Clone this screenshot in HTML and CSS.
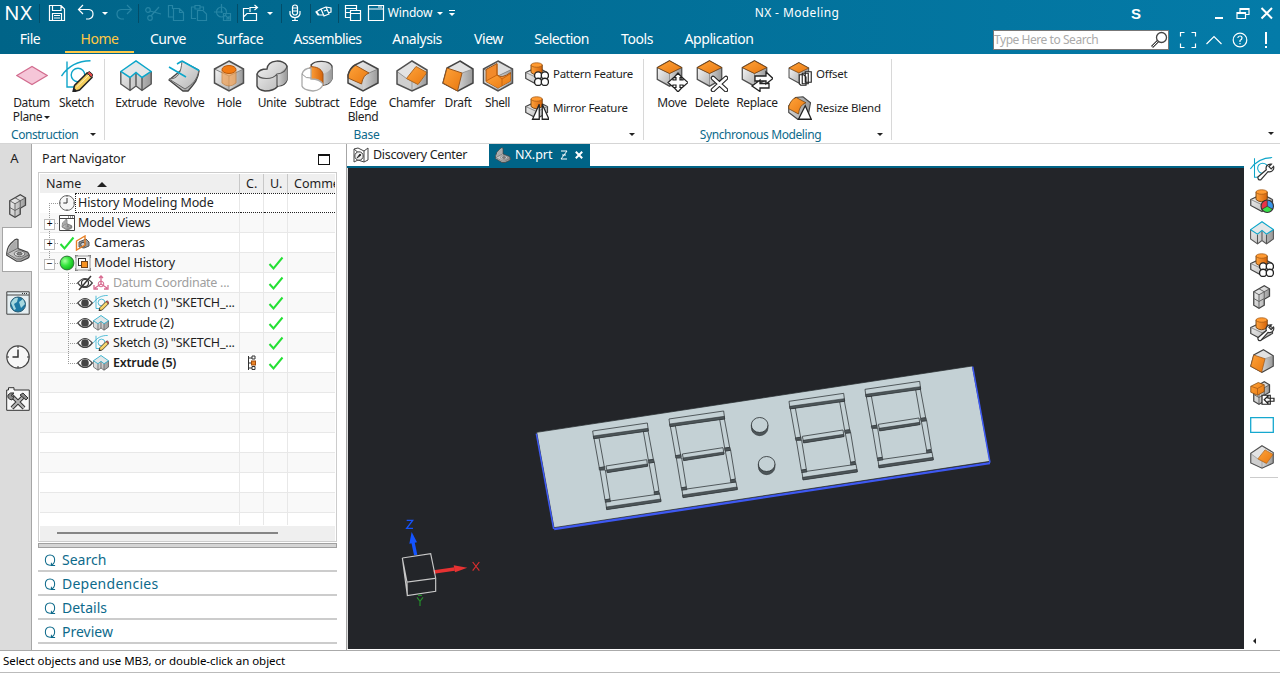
FILE: index.html
```html
<!DOCTYPE html>
<html lang="en">
<head>
<meta charset="utf-8">
<title>NX - Modeling</title>
<link rel="stylesheet" href="styles.css">
</head>
<body>
<svg class="defs" width="0" height="0" aria-hidden="true">
  <defs>
    <linearGradient id="gr" x1="0" y1="0" x2="1" y2="1"><stop offset="0" stop-color="#f4f4f4"/><stop offset="1" stop-color="#b4b4b4"/></linearGradient>
    <linearGradient id="gd" x1="0" y1="0" x2="1" y2="0"><stop offset="0" stop-color="#d4d4d4"/><stop offset="1" stop-color="#999"/></linearGradient>
    <linearGradient id="or" x1="0" y1="0" x2="1" y2="1"><stop offset="0" stop-color="#ffa33a"/><stop offset="1" stop-color="#e87810"/></linearGradient>
    <linearGradient id="od" x1="0" y1="0" x2="1" y2="0"><stop offset="0" stop-color="#ffa23c"/><stop offset="1" stop-color="#d5640a"/></linearGradient>
    <radialGradient id="gn" cx=".35" cy=".35" r=".7"><stop offset="0" stop-color="#a8ffa0"/><stop offset=".5" stop-color="#35e53d"/><stop offset="1" stop-color="#0fb61a"/></radialGradient>
  </defs>
  <symbol id="plane" viewBox="0 0 32 32"><path d="M0.8 15.500 16 6.500 31.200 15.500 16 24.500Z" fill="#f5c6d8" stroke="#d26c8e" stroke-width="1.200"/></symbol>
  <symbol id="curves" viewBox="0 0 32 32"><g fill="none" stroke="#0fa5c9" stroke-width="1.400"><path d="M.5 16C8 5 17 1 29.500.8M6 1.500V27H17"/><circle cx="17" cy="15" r="6.800"/></g></symbol>
  <symbol id="sketch" viewBox="0 0 32 32"><use href="#curves"/><path d="M12 32 13.500 25.500 26 13 31 17.500 18.500 30Z" fill="#f4ce5b" stroke="#222" stroke-width="1.500"/><path d="M26 13 28.500 11.500 32 14.800 30.500 17.500Z" fill="#e04848" stroke="#333"/><path d="M12 32 13 28 16 30.500Z" fill="#222"/><path d="M15.500 27 28 15" stroke="#fff1b8"/></symbol>
  <symbol id="extrude" viewBox="0 0 32 32"><path d="M.8 11.500 16 1 31.200 11.500V24L22 30.500 16 26 10 30.500.8 24Z" fill="url(#gr)"/><path d="M10 17.500 16 13V26L10 30.500ZM22 17.500 31.200 11.500V24L22 30.500Z" fill="url(#gd)"/><path d="M.8 11.500V24L10 30.500 16 26 22 30.500 31.200 24V11.500M10 18V30M22 18V30M16 13V26" fill="none" stroke="#555" stroke-width="1.400"/><path d="M.8 11.500 16 1 31.200 11.500 22 17.500 16 12.500 10 17.500Z" fill="#e4e7e8" stroke="#0ba6ca" stroke-width="1.500"/></symbol>
  <symbol id="revolve" viewBox="0 0 32 32"><path d="M1 20 12 11 22 6 31 11C30 20 26 24 20 31H15Z" fill="url(#gd)" stroke="#444" stroke-width="1.300"/><path d="M1 19C10 19 13 13 14 1L31 10C29 20 25 24 17 29Z" fill="url(#gr)" stroke="#666"/><path d="M14 1 31 10.500M1 7 18 17M14 1 9 4" stroke="#0ba6ca" stroke-width="1.600"/></symbol>
  <symbol id="cube" viewBox="0 0 32 32"><path d="M16 1 30.500 9V23L16 31 1.500 23V9Z" fill="#ddd"/><path d="M1.500 9 16 16V31L1.500 23Z" fill="url(#gr)"/><path d="M30.500 9 16 16V31L30.500 23Z" fill="url(#gd)"/><path d="M1.500 9 16 16 30.500 9M16 16V31" stroke="#888" fill="none"/><path d="M16 1 30.500 9V23L16 31 1.500 23V9Z" fill="none" stroke="#505050" stroke-width="1.500"/></symbol>
  <symbol id="ocube" viewBox="0 0 32 32"><use href="#cube"/><path d="M16 1 30.500 9 16 16 1.500 9Z" fill="url(#or)" stroke="#76410f" stroke-width="1"/></symbol>
  <symbol id="hole" viewBox="0 0 32 32"><use href="#cube"/><path d="M9 10V23Q16 29 23 23V10Z" fill="#f7a04d" opacity=".65" stroke="#c9792b"/><ellipse cx="16" cy="9.500" rx="7" ry="4" fill="#f47c13" stroke="#ba5a0c"/></symbol>
  <symbol id="unite" viewBox="0 0 32 32"><path d="M1 14Q3 9 11 9C12-1 28-1 31 6V20Q29 26 22 26Q18 31 9 31Q2 30 1 26Z" fill="url(#gr)" stroke="#444" stroke-width="1.400"/><path d="M21 15 31 7V20Q29 25 22 26Z" fill="url(#gd)"/><path d="M1 14C3 20 17 20 21 14Q30 13 31 6M21 15V26" stroke="#555" fill="none" stroke-width="1.200"/></symbol>
  <symbol id="subtract" viewBox="0 0 32 32"><path d="M10 5C14 0 28 0 31 6V19Q28 26 20 25Z" fill="url(#gr)" stroke="#444" stroke-width="1.300"/><path d="M20 14Q28 13 31 7V20Q28 25 20 25Z" fill="url(#gd)"/><path d="M9 7C15 6 21 9 22 14V26Q17 20 9 20Z" fill="url(#od)" stroke="#a65211"/><path d="M1 14Q3 8 10 8V19Q19 19 22 24Q21 30 12 31Q2 30 1 26Z" fill="#fff" stroke="#aaa" stroke-width="1.300"/><path d="M1 14Q5 19 10 18" fill="none" stroke="#999"/></symbol>
  <symbol id="blend" viewBox="0 0 32 32"><path d="M16 1 31 9V23L16 31 1 23V15Q3 8 8 5Z" fill="url(#gr)"/><path d="M31 9 20 14Q16 18 16 31L31 23Z" fill="url(#gd)"/><path d="M1 15Q3 7 8 5L22 13Q16 15 14.500 24L1 18Z" fill="url(#or)" stroke="#9a561b"/><path d="M22 13 31 9" stroke="#888"/><path d="M16 1 31 9V23L16 31 1 23V15Q3 8 8 5Z" fill="none" stroke="#444" stroke-width="1.500"/></symbol>
  <symbol id="chamfer" viewBox="0 0 32 32"><path d="M16 1 31 10V24L16 31 1 24V11Z" fill="#e3e3e3"/><path d="M1 11 10.500 18.500 16 21.500V31L1 24Z" fill="#cfcfcf"/><path d="M31 13 22 24 16 21.500V31L31 24Z" fill="url(#gd)"/><path d="M1 11.500 10.500 18.500 16 21.500V31M16 21.500 22 24" fill="none" stroke="#999"/><path d="M20 6.500 31 12.500 22 24.500 10.500 18.500Z" fill="url(#or)" stroke="#b26a22"/><path d="M16 1 31 10V24L16 31 1 24V11Z" fill="none" stroke="#505050" stroke-width="1.500"/></symbol>
  <symbol id="draft" viewBox="0 0 32 32"><path d="M18 1 31 9V23L16 31 1 23 5 8Z" fill="#e2e2e2"/><path d="M31 9 20 13 15.500 31 31 23Z" fill="url(#gd)"/><path d="M20 13 31 9" stroke="#999"/><path d="M18 1 31 9V23L16 31 1 23 5 8Z" fill="none" stroke="#444" stroke-width="1.500"/><path d="M5 8 20 13 15.500 31 1 23Z" fill="url(#or)" stroke="#9a561b"/></symbol>
  <symbol id="shell" viewBox="0 0 32 32"><use href="#cube"/><path d="M4 9.500 15 3.500V15Q20 19 28.500 12.500V21L16 28 4 21.500Z" fill="#f28a2b" stroke="#9a561b"/><path d="M4 21.500 15 15 20 19 28.500 14V21L16 28Z" fill="url(#or)"/><path d="M4 21 15 15V4M15 15 20 19V26M20 19 28 14" stroke="#c8640f" fill="none"/></symbol>
  <symbol id="base" viewBox="0 0 32 32"><path d="M1 14 16 7 30 14V22L16 30 1 22Z" fill="url(#gr)" stroke="#444" stroke-width="1.600"/><path d="M1 14 16 21 30 14M16 21V30" fill="none" stroke="#777"/><path d="M8 4V14Q15 20 23 14V4Z" fill="url(#od)" stroke="#70400f" stroke-width="1.200"/><ellipse cx="15.500" cy="4" rx="7.500" ry="3" fill="#ff9a31" stroke="#a45914"/></symbol>
  <symbol id="pattern" viewBox="0 0 32 32"><use href="#base"/><g fill="#fff" stroke="#222" stroke-width="1.800"><circle cx="17.500" cy="18" r="4.800"/><circle cx="26.500" cy="18" r="4.800"/><circle cx="17.500" cy="26.500" r="4.800"/><circle cx="26.500" cy="26.500" r="4.800"/></g></symbol>
  <symbol id="mirror" viewBox="0 0 32 32"><use href="#base"/><path d="M19 11V31H10ZM23 11V31H32Z" fill="#fff" stroke="#222" stroke-width="1.700"/></symbol>
  <symbol id="move" viewBox="0 0 32 32"><svg width="27" height="27"><use href="#ocube"/></svg><path d="M22 13 26 17.500H24V20H27V18L32 22.500 27 27V25H24V27.500H26L22 32 18 27.500H20V25H17V27L12 22.500 17 18V20H20V17.500H18Z" fill="#fff" stroke="#222" stroke-width="1.200"/></symbol>
  <symbol id="delete" viewBox="0 0 32 32"><svg width="27" height="27"><use href="#ocube"/></svg><path d="M17 18 30 30M30 18 17 30" stroke="#222" stroke-width="4.600" stroke-linecap="round"/><path d="M17 18 30 30M30 18 17 30" stroke="#fff" stroke-width="2.400" stroke-linecap="round"/></symbol>
  <symbol id="replace" viewBox="0 0 32 32"><svg width="27" height="27"><use href="#ocube"/></svg><path d="M14 16H25V12L32 18.500 25 24V21H14ZM28 23.500H19V20L11 26 19 31.500V28H28Z" fill="#fff" stroke="#222" stroke-width="1.300"/></symbol>
  <symbol id="offset" viewBox="0 0 32 32"><svg width="29" height="29"><use href="#ocube"/></svg><path d="M23 13H31V27H23ZM19 15H27V29H19ZM15 17H21L24 20V31H17L15 29Z" fill="#fff" stroke="#222" stroke-width="1.500"/></symbol>
  <symbol id="resize" viewBox="0 0 32 32"><path d="M1 13 10 2 20 1 30 9 27 26 13 31 1 22Z" fill="url(#gd)" stroke="#444" stroke-width="1.500"/><path d="M1 14Q4 4 11 2L24 9Q15 12 14 24L1 17Z" fill="url(#or)" stroke="#704210"/><path d="M23 13 31 31H14Z" fill="#fff" stroke="#222" stroke-width="1.700"/></symbol>
  <symbol id="assembly" viewBox="0 0 32 32"><path d="M5 9 19 1 26 5V15L19 19V27L12 31 5 27Z" fill="url(#gr)"/><path d="M12 13 26 5V15L19 19V27L12 31Z" fill="url(#gd)"/><path d="M5 9 19 1 26 5V15L19 19V27L12 31 5 27Z" fill="none" stroke="#444" stroke-width="1.700"/><path d="M5 9 12 13 26 5M12 13V31M5 18 12 22 19 18V9M12 5 19 9" fill="none" stroke="#5c5c5c" stroke-width="1.200"/></symbol>
  <symbol id="part" viewBox="0 0 32 32"><path d="M1 20Q2 10 9 5Q13 0 16 2V14L29 19Q33 24 29 27L20 31H14L1 23Z" fill="url(#gd)" stroke="#444" stroke-width="1.600"/><path d="M3 19Q4 11 10 6Q13 3 14 5V14L5 20Z" fill="#aaa"/><path d="M15 14 2 21 14 28H20L31 22" fill="none" stroke="#555"/><ellipse cx="18" cy="21" rx="7" ry="3.800" fill="#ddd" stroke="#555"/><ellipse cx="18" cy="21" rx="3.500" ry="1.800" fill="#888" stroke="#444"/></symbol>
  <symbol id="clock" viewBox="0 0 24 24"><circle cx="12" cy="12" r="11.200" fill="#f7f7f7" stroke="#444" stroke-width="1.200"/><path d="M12 4.500V12H6.500" stroke="#333" stroke-width="1.500" fill="none"/><path d="M12 1V3M12 21V23M1 12H3M21 12H23" stroke="#333"/></symbol>
  <symbol id="web" viewBox="0 0 24 24"><path d="M.8.800H23.200V23.200H.8Z" fill="#e6eff2" stroke="#444"/><path d="M1 4H23" stroke="#444"/><path d="M16 2.500H22" stroke="#333" stroke-dasharray="1 1"/><circle cx="12" cy="13.500" r="7.500" fill="#1d79a4" stroke="#285a70"/><path d="M5 12Q8 6 12 7L11 11 8 13 10 18 8 19ZM13 11 17 8 19 13 15 17Z" fill="#a6d8df"/></symbol>
  <symbol id="wrench" viewBox="0 0 16 16"><path d="M1 12.500 8.500 6C7.500 3 10 .5 13 1L10.800 3.200 12.800 5.200 15 3C16 6 13 8.500 10 7.700L3.500 15Q1 15.500 1 12.500Z" fill="#fff" stroke="#333" stroke-width="1.100"/></symbol>
  <symbol id="tools" viewBox="0 0 24 24"><path d="M2.500 3V.7H8V3H23.300V23.300H.7V3Z" fill="#f8f8f8" stroke="#333"/><path d="M5 8 18 21M18 9 6 21" stroke="#333" stroke-width="4"/><path d="M5 8 18 21M18 9 6 21" stroke="#b6b6b6" stroke-width="2"/><path d="M14 8 17 6 22 11 20 13ZM2 8Q4 5 8 6L5 8.500 8 10 6 13Q1 12 2 8Z" fill="#888" stroke="#333"/></symbol>
  <symbol id="views" viewBox="0 0 16 16"><path d="M.5.500H15.500V15.500H.5Z" fill="#fff" stroke="#444"/><path d="M0 3.500H16" stroke="#444"/><path d="M9 2H15" stroke="#333" stroke-dasharray="1 1"/><svg x="2.500" y="4" width="11" height="11"><use href="#part"/></svg></symbol>
  <symbol id="camera" viewBox="0 0 16 16"><path d="M4 7 11 4 14 7V11L9 13 4 12Z" fill="#999" stroke="#555"/><circle cx="8" cy="9.500" r="2.300" fill="#ccc" stroke="#444"/><path d="M1.500 6 10 1V10L1.500 15Z" fill="none" stroke="#e78026" stroke-width="1.400"/></symbol>
  <symbol id="history" viewBox="0 0 16 16"><rect x="1" y="1" width="14" height="14" fill="#f6f6f6" stroke="#999"/><path d="M0 3V0H3M13 0H16V3M16 13V16H13M3 16H0V13" fill="none" stroke="#555"/><rect x="3.500" y="3.500" width="7" height="7" fill="#fff" stroke="#333"/><rect x="6.500" y="6.500" width="6" height="6" fill="#f69222" stroke="#70421a"/></symbol>
  <symbol id="eye" viewBox="0 0 16 16"><path d="M.7 8Q8-1 15.300 8Q8 17 .7 8Z" fill="#fff" stroke="#444" stroke-width="1.200"/><circle cx="8" cy="8" r="3.800" fill="#444"/></symbol>
  <symbol id="noeye" viewBox="0 0 16 16"><path d="M.7 8Q8-1 15.300 8Q8 17 .7 8Z" fill="#fff" stroke="#444" stroke-width="1.200"/><circle cx="8" cy="8" r="3.500" fill="none" stroke="#333" stroke-width="1.200"/><path d="M2 15 14 1" stroke="#333" stroke-width="1.400"/></symbol>
  <symbol id="csys" viewBox="0 0 16 16"><path d="M8 1V9M8 9 2 13M8 9 14 13M6 3 8 1 10 3M1 10V14H5M15 10V14H11" fill="none" stroke="#d86a90" stroke-width="1.300"/><circle cx="8" cy="9" r="2.800" fill="none" stroke="#d86a90"/></symbol>
  <symbol id="check" viewBox="0 0 16 16"><path d="M1.500 9 5.500 13.500 14.500 2.500" fill="none" stroke="#25df35" stroke-width="2"/></symbol>
  <symbol id="ball" viewBox="0 0 16 16"><circle cx="8" cy="8" r="6.900" fill="url(#gn)" stroke="#32723a"/></symbol>
  <symbol id="deps" viewBox="0 0 10 16"><path d="M1.500 1V15M1.500 3H5M1.500 8H5M1.500 13H5" stroke="#333" fill="none"/><path d="M5 1H8V4H5ZM5 11.500H8V14.500H5Z" fill="#fff" stroke="#333"/><rect x="4.500" y="6" width="4" height="4" fill="#ec8325" stroke="#a04d0c"/></symbol>
  <symbol id="q" viewBox="0 0 12 14"><path d="M6 1C2.500 1 1 3.500 1 6.500S2.500 12 6 12S11 9.500 11 6.500S9.500 1 6 1ZM7.500 9.500V12.500H11.500" fill="none" stroke="#0d6a8b" stroke-width="1.100"/></symbol>
  <symbol id="discover" viewBox="0 0 16 16"><path d="M1 2 5 1 11 4V15L5 13 1 15ZM11 4 15 1V13L11 15" fill="#fff" stroke="#444"/><path d="M1 2 8 8" stroke="#444"/><circle cx="6" cy="9" r="4.200" fill="#eee" stroke="#444"/><path d="M4 11 7 7 8 8Z" stroke="#333"/></symbol>
</svg>

<div class="app">
  <header class="titlebar">
    <div class="quick">
      <span class="brand">NX</span><i class="sep"></i>
      <svg width="18" height="18" class="line"><path d="M1.500 1.500H13L16.500 5V16.500H1.500ZM4.500 1.500V6.500H13V1.500M4.500 16.500V9.500H13.500V16.500M6 11.500H12M6 14H12"/></svg>
      <svg width="18" height="18" class="line"><path d="M6 1 1.500 5.500 6 10M1.500 5.500H12Q16 6 16 10T12 15H9"/></svg>
      <i class="caret"></i>
      <svg width="18" height="18" class="line dim"><path d="M12 1 16.500 5.500 12 10M16.500 5.500H6Q2 6 2 10T6 15H9"/></svg>
      <i class="sep"></i>
      <svg width="18" height="18" class="line dim"><circle cx="4" cy="6" r="2.300"/><circle cx="6" cy="14" r="2.300"/><path d="M6 7 17 10M7 12 15 3"/></svg>
      <svg width="18" height="18" class="line dim"><path d="M5.500 5V1.500H1.500V13H6.500M6.500 4.500H12.500L16.500 8.500V16.500H6.500ZM12.500 4.500V8.500H16.500"/></svg>
      <svg width="18" height="18" class="line dim"><path d="M6 14.500H1.500V3H5V1.500H10V3H13.500V6M7.500 6.500H13L16.500 10V16.500H7.500ZM5 3V5H10V3"/></svg>
      <svg width="18" height="18" class="line dim"><circle cx="7.500" cy="8" r="5"/><path d="M7.500 0V9M0 8H9M9.500 9.500H16.500V16.500H9.500ZM11 11 15 15M15 12V15H12"/></svg>
      <i class="sep"></i>
      <svg width="18" height="18" class="line"><path d="M7 4.500H1.500V16.500H14.500V9.500H5L1.500 13M8 8V3.500H15M12.500 1 15.500 3.500 12.500 6"/></svg>
      <i class="caret"></i><i class="sep"></i>
      <svg width="14" height="18" class="line"><rect x="4.500" y="1" width="5" height="10" rx="2.500"/><path d="M2 7V10Q3 13.500 7 13.500T12 10V7M7 13.500V16.500M4 16.500H10M5 4H9M5 7H9"/></svg>
      <i class="sep"></i>
      <svg width="18" height="18" class="line"><path d="M6 5 11 3 14 10 9 12ZM11 3 16 4V8L13 9M6 5 1 8 3 11H8M2 8 4 11M9 7 12 6"/></svg>
      <i class="sep"></i>
      <svg width="18" height="18" class="line"><path d="M6 13.500H1.500V1.500H12.500V6M1.500 4.500H12.500M6.500 6.500H16.500V16.500H6.500ZM6.500 9.500H16.500M1.500 8.500H6"/></svg>
      <svg width="18" height="18" class="line"><path d="M1.500 1.500H16.500V16.500H1.500ZM1.500 5H16.500M11 3H15"/></svg>
      <span class="window">Window</span><i class="caret"></i><i class="barred"><i class="caret"></i></i>
      <span class="title">NX - Modeling</span><b class="siemens">S</b>
      <svg width="12" height="18" class="ctl"><path d="M2 14H10"/></svg>
      <svg width="14" height="18" class="ctl thin"><path d="M4 8V4.500H13V10.500H10M4 5.500H13M1 8.500H9.500V14.500H1ZM1 9.500H9.500"/></svg>
      <svg width="14" height="18" class="ctl"><path d="M1.500 4 12 14.500M12 4 1.500 14.500"/></svg>
    </div>
    <nav class="tabs">
      <span>File</span><span class="on">Home</span><span>Curve</span><span>Surface</span><span>Assemblies</span><span>Analysis</span><span>View</span><span>Selection</span><span>Tools</span><span>Application</span>
      <label class="search"><span>Type Here to Search</span><svg width="18" height="18"><circle cx="11.500" cy="6.500" r="5" fill="#fff" stroke="#444" stroke-width="1.300"/><path d="M8 10 2 16" stroke="#444" stroke-width="3"/><path d="M7.500 10.500 2.500 15.500" stroke="#fff"/></svg></label>
      <svg width="18" height="18" class="line"><path d="M1.500 5.500V1.500H5.500M12.500 1.500H16.500V5.500M16.500 12.500V16.500H12.500M5.500 16.500H1.500V12.500"/></svg>
      <svg width="18" height="18" class="line"><path d="M1.500 13 9 5.500 16.500 13"/></svg>
      <svg width="18" height="18" class="line"><circle cx="9" cy="9" r="6.800"/><path d="M6.800 7Q7 5 9 5T11 7Q11 8.500 9 9.500V11M9 12V13.200"/></svg>
      <svg width="6" height="18" class="line"><path d="M3 1V13M3 15V17" stroke-width="2"/></svg>
    </nav>
  </header>

  <section class="ribbon">
    <div class="group construction">
      <div class="tools">
        <div class="tool"><svg><use href="#plane"/></svg><span>Datum<br>Plane<i class="caret"></i></span></div>
        <div class="tool"><svg><use href="#sketch"/></svg><span>Sketch</span></div>
      </div>
      <footer><span>Construction</span><i class="caret"></i></footer>
    </div>
    <div class="group base">
      <div class="tools">
        <div class="tool"><svg><use href="#extrude"/></svg><span>Extrude</span></div>
        <div class="tool"><svg><use href="#revolve"/></svg><span>Revolve</span></div>
        <div class="tool"><svg><use href="#hole"/></svg><span>Hole</span></div>
        <div class="tool"><svg><use href="#unite"/></svg><span>Unite</span></div>
        <div class="tool"><svg><use href="#subtract"/></svg><span>Subtract</span></div>
        <div class="tool"><svg><use href="#blend"/></svg><span>Edge<br>Blend</span></div>
        <div class="tool"><svg><use href="#chamfer"/></svg><span>Chamfer</span></div>
        <div class="tool"><svg><use href="#draft"/></svg><span>Draft</span></div>
        <div class="tool"><svg><use href="#shell"/></svg><span>Shell</span></div>
        <div class="stack"><div><svg><use href="#pattern"/></svg>Pattern Feature</div><div><svg><use href="#mirror"/></svg>Mirror Feature</div></div>
      </div>
      <footer><span>Base</span><i class="caret"></i></footer>
    </div>
    <div class="group sync">
      <div class="tools">
        <div class="tool"><svg><use href="#move"/></svg><span>Move</span></div>
        <div class="tool"><svg><use href="#delete"/></svg><span>Delete</span></div>
        <div class="tool"><svg><use href="#replace"/></svg><span>Replace</span></div>
        <div class="stack"><div><svg><use href="#offset"/></svg>Offset</div><div><svg><use href="#resize"/></svg>Resize Blend</div></div>
      </div>
      <footer><span>Synchronous Modeling</span><i class="caret"></i></footer>
    </div>
    <i class="caret more"></i>
  </section>

  <main class="work">
    <aside class="rail">
      <div class="font">A</div>
      <div class="asm"><svg><use href="#assembly"/></svg></div>
      <div class="cur"><svg><use href="#part"/></svg></div>
      <div class="net"><svg><use href="#web"/></svg></div>
      <div class="time"><svg><use href="#clock"/></svg></div>
      <div class="cfg"><svg><use href="#tools"/></svg></div>
    </aside>

    <section class="navigator">
      <h2><span>Part Navigator</span><i class="max"></i></h2>
      <div class="tree">
        <div class="row head"><span>Name <i class="up"></i></span><span>C.</span><span>U.</span><span>Comme</span></div>
        <div class="row focus"><span class="l1"><i class="twig first"></i><svg><use href="#clock"/></svg><em>History Modeling Mode</em></span><span></span><span></span><span></span></div>
        <div class="row"><span class="l1"><i class="twig plus"></i><svg><use href="#views"/></svg>Model Views</span><span></span><span></span><span></span></div>
        <div class="row"><span class="l1"><i class="twig plus"></i><svg><use href="#check"/></svg><svg><use href="#camera"/></svg>Cameras</span><span></span><span></span><span></span></div>
        <div class="row"><span class="l1"><i class="twig minus last"></i><svg><use href="#ball"/></svg><svg><use href="#history"/></svg>Model History</span><span></span><span><svg><use href="#check"/></svg></span><span></span></div>
        <div class="row off"><span class="l2"><i class="twig"></i><svg><use href="#noeye"/></svg><svg><use href="#csys"/></svg>Datum Coordinate ...</span><span></span><span><svg><use href="#check"/></svg></span><span></span></div>
        <div class="row"><span class="l2 wide"><i class="twig"></i><svg><use href="#eye"/></svg><svg><use href="#sketch"/></svg>Sketch (1) "SKETCH_...</span><span></span><span><svg><use href="#check"/></svg></span><span></span></div>
        <div class="row"><span class="l2"><i class="twig"></i><svg><use href="#eye"/></svg><svg><use href="#extrude"/></svg>Extrude (2)</span><span></span><span><svg><use href="#check"/></svg></span><span></span></div>
        <div class="row"><span class="l2 wide"><i class="twig"></i><svg><use href="#eye"/></svg><svg><use href="#sketch"/></svg>Sketch (3) "SKETCH_...</span><span></span><span><svg><use href="#check"/></svg></span><span></span></div>
        <div class="row strong"><span class="l2"><i class="twig last"></i><svg><use href="#eye"/></svg><svg><use href="#extrude"/></svg>Extrude (5)</span><span><svg><use href="#deps"/></svg></span><span><svg><use href="#check"/></svg></span><span></span></div>
        <div class="row"><span></span><span></span><span></span><span></span></div>
        <div class="row"><span></span><span></span><span></span><span></span></div>
        <div class="row"><span></span><span></span><span></span><span></span></div>
        <div class="row"><span></span><span></span><span></span><span></span></div>
        <div class="row"><span></span><span></span><span></span><span></span></div>
        <div class="row"><span></span><span></span><span></span><span></span></div>
        <div class="row"><span></span><span></span><span></span><span></span></div>
        <div class="row short"><span></span><span></span><span></span><span></span></div>
        <div class="scroll"><i></i></div>
      </div>
      <div class="splitter"></div>
      <div class="fold"><svg><use href="#q"/></svg>Search</div>
      <div class="fold dep"><svg><use href="#q"/></svg>Dependencies</div>
      <div class="fold"><svg><use href="#q"/></svg>Details</div>
      <div class="fold"><svg><use href="#q"/></svg>Preview</div>
    </section>

    <section class="graphics">
      <div class="docs">
        <div class="doc"><svg><use href="#discover"/></svg>Discovery Center</div>
        <div class="doc active"><svg><use href="#part"/></svg><span>NX.prt</span><svg class="pin" viewBox="0 0 8 10"><path d="M1 1H7L1 9H7M2 5H6"/></svg><svg class="x" viewBox="0 0 8 8"><path d="M.8.800 7.200 7.200M7.200.800.800 7.200"/></svg></div>
      </div>
      <svg class="canvas" viewBox="348 168 896 481">
        <defs>
          <g id="digit">
            <path class="edge" d="M188 213 352 189 355 212 191 235ZM192 235 207 233 223 321 208 324ZM228 318 350 299 353 318 232 337ZM340 214 354 212 370 298 355 300ZM210 330 226 330 240 417 225 420ZM357 309 373 307 387 393 373 396ZM227 425 389 402 393 424 230 448Z"/>
            <path class="side" d="M190 228 354 205 355 213 191 236ZM207 323 224 320 225 328 208 330ZM230 330 352 312 353 319 232 338ZM354 301 371 298 373 307 356 309ZM225 419 240 417 242 425 226 427ZM372 396 387 394 389 402 373 404ZM229 441 392 417 393 425 230 449Z"/>
          </g>
        </defs>
        <g transform="translate(530 360) scale(.33333)">
          <path d="M20 217 1327 18 1380 304 72 503Z" fill="#c4d1d5"/>
          <path d="M20 217 1327 18 1380 304 72 503Z" class="edge"/>
          <path d="M72 504 1380 306V313L73 511Z" fill="#3e59f2"/>
          <path d="M19 221 71 507M1328 20 1380 308" stroke="#3e59f2" stroke-width="4.500"/>
          <use href="#digit"/><use href="#digit" x="229" y="-36"/><use href="#digit" x="589" y="-89"/><use href="#digit" x="817" y="-125"/>
          <g id="dot"><path d="M664 195V202A25 24 0 0 0 714 204V195Z" class="side"/><ellipse cx="689" cy="195" rx="25" ry="22.500" fill="#c4d1d5" class="rim"/></g>
          <use href="#dot" x="21" y="117"/>
        </g>
        <g transform="translate(390 510) scale(.33333)">
          <path d="M77 135 69 97" stroke="#1454ff" stroke-width="10"/><path d="M65 66 81 97 58 101Z" fill="#1454ff"/>
          <path d="M131 186 194 177" stroke="#e63232" stroke-width="10"/><path d="M191 166 232 173 195 187Z" fill="#e63232"/>
          <path d="M37 144 122 131 137 204V244L52 257 37 144 51 216 135 205M51 216 52 257" fill="none" stroke="#c8c8c8" stroke-width="3.500"/>
          <path d="M50 31H68L50 55H69" stroke="#1652fa" stroke-width="4" fill="none"/>
          <path d="M248 156 268 182M268 156 248 182" stroke="#d92e2e" stroke-width="3.500"/>
          <path d="M81 262 90 274 99 262M90 274V288M84 256H96" stroke="#258d2b" stroke-width="3.500" fill="none"/>
        </g>
      </svg>
    </section>

    <aside class="palette">
      <svg viewBox="0 0 32 32"><use href="#curves"/><svg x="9" y="8" width="23" height="24"><use href="#wrench"/></svg></svg>
      <svg viewBox="0 0 32 32"><use href="#base"/><circle cx="23" cy="23" r="8" fill="#ea3347"/><path d="M23 23V15A8 8 0 0 1 30 27Z" fill="#3996ea"/><path d="M23 23 30 27A8 8 0 0 1 16 27Z" fill="#38df4a"/><path d="M23 15V23L30 27M23 23 16 27" stroke="#333" fill="none"/><circle cx="23" cy="23" r="8.300" fill="none" stroke="#333" stroke-width="1.500"/></svg>
      <svg><use href="#extrude"/></svg>
      <svg><use href="#pattern"/></svg>
      <svg><use href="#assembly"/></svg>
      <svg viewBox="0 0 32 32"><use href="#base"/><svg x="9" y="9" width="23" height="24"><use href="#wrench"/></svg></svg>
      <svg><use href="#draft"/></svg>
      <svg viewBox="0 0 32 32"><use href="#assembly"/><path d="M1 7 11 2 19 5V14L10 19 1 15Z" fill="url(#or)" stroke="#7d470f"/><path d="M1 7 10 10 19 5M10 10V19" fill="none" stroke="#a75a15"/><path d="M16 19H27V31H16ZM19 25 24 20V23H32V27H24V30Z" fill="#fff" stroke="#222" stroke-width="1.600"/></svg>
      <svg viewBox="0 0 24 24"><path d="M.7 4.700H23.300V19.300H.7Z" fill="#fff" stroke="#16a8cf" stroke-width="1.300"/></svg>
      <svg><use href="#chamfer"/></svg>
      <i class="rule"></i>
      <i class="left"></i>
    </aside>
  </main>
  <footer class="status">Select objects and use MB3, or double-click an object</footer>
</div>
</body>
</html>
```

FILE: styles.css
```css
* { box-sizing: border-box; }
body { margin: 0; background: #fff; color: #1e1e1e; font: 12px/14px "Noto Sans", "Open Sans", sans-serif; }
i, em { font-style: normal; }
.defs { position: absolute; }
svg { display: block; overflow: visible; flex: none; }
.app { width: 1280px; height: 673px; display: flex; flex-direction: column; overflow: hidden; white-space: nowrap; }
.caret { display: inline-block; width: 0; height: 0; border: 3px solid transparent; border-top-color: currentColor; border-bottom: 0; }

.titlebar { height: 54px; color: #fff; background: linear-gradient(90deg, #006488, #047ba8); }
.line { fill: none; stroke: #fff; stroke-width: 1.2; }
.dim { stroke: #2685a5; }
.quick { height: 26px; display: grid; align-items: center; justify-items: center; grid-template-columns: 38px 2px 34px 24px 14px 24px 5px 24px 22px 24px 23px 6px 22px 16px 6px 22px 8px 20px 9px 20px 26px 42px 18px 9px 670px 16px 81px 25px 24px; }
.brand { font-size: 20px; letter-spacing: .8px; margin-left: -1px; }
.sep { width: 1px; height: 19px; background: #034d69; }
.barred { display: flex; justify-content: center; width: 6px; padding-top: 2px; border-top: 1px solid #fff; margin-left: -3px; }
.window { font-size: 12px; letter-spacing: -.2px; }
.title { font-size: 12px; letter-spacing: .4px; padding-left: 8px; }
.siemens { font: bold 15px "Liberation Sans", sans-serif; padding-top: 1px; }
.ctl { fill: none; stroke: #fff; stroke-width: 2; justify-self: end; }
.thin { stroke-width: 1.2; }
.tabs { height: 28px; display: flex; align-items: center; font-size: 14px; }
.tabs > span { height: 26px; line-height: 24px; text-align: center; letter-spacing: -.45px; }
.tabs > span:nth-child(1) { width: 60px; }
.tabs > span:nth-child(2) { width: 69px; margin-left: 5px; }
.tabs > span:nth-child(3) { width: 68px; }
.tabs > span:nth-child(4) { width: 76px; }
.tabs > span:nth-child(5) { width: 99px; letter-spacing: -.6px; }
.tabs > span:nth-child(6) { width: 80px; }
.tabs > span:nth-child(7) { width: 63px; }
.tabs > span:nth-child(8) { width: 83px; letter-spacing: -.55px; }
.tabs > span:nth-child(9) { width: 68px; }
.tabs > span:nth-child(10) { width: 96px; }
.tabs > .on { color: #ffc845; border-bottom: 2px solid #ffc845; }
.search { width: 176px; height: 20px; margin: 0 10px 0 226px; display: flex; justify-content: space-between; align-items: center; background: #fff; border: 1px solid #777; color: #aaa; font-size: 12px; letter-spacing: -.45px; }
.tabs > svg { margin-right: 8px; }
.tabs > svg:nth-last-child(2) { margin-right: 14px; }

.ribbon { height: 90px; display: flex; border-bottom: 1px solid #d5d5d5; }
.group { margin-top: 5px; height: 81px; display: flex; flex-direction: column; border-right: 1px solid #d8d8d8; }
.tools { height: 69px; flex: none; display: flex; }
.construction { width: 105px; padding-left: 9px; }
.base { width: 539px; padding-left: 7px; }
.sync { width: 248px; padding-left: 8px; }
.tool { text-align: center; }
.tool svg { width: 32px; height: 32px; margin: 1px auto 4px; }
.tool:nth-child(1) { width: 48px; }
.tool:nth-child(2) { width: 48px; }
.tool:nth-child(3) { width: 42px; }
.tool:nth-child(4) { width: 44px; }
.tool:nth-child(5) { width: 46px; }
.tool:nth-child(6) { width: 46px; }
.tool:nth-child(7) { width: 52px; }
.tool:nth-child(8) { width: 40px; }
.tool:nth-child(9) { width: 39px; }
.construction .tool:nth-child(n) { width: 45px; }
.tool > span { display: block; letter-spacing: -.35px; }
.tool .caret { vertical-align: 2px; margin-left: 2px; }
.sync .tool:nth-child(-n+2) { width: 40px; }
.sync .tool:nth-child(3) { width: 50px; }
.stack { margin-left: 8px; padding-top: 3px; font-size: 11.5px; letter-spacing: -.28px; }
.sync .stack { margin-left: 6px; }
.stack div { display: flex; align-items: center; gap: 4px; height: 24px; margin-bottom: 10px; }
.stack svg { width: 24px; height: 24px; }
.group footer { display: flex; justify-content: center; align-items: center; height: 13px; color: #0d6a8b; position: relative; letter-spacing: -.2px; }
.group footer .caret, .more { color: #222; }
.construction footer { justify-content: space-between; padding: 0 8px 0 2px; letter-spacing: -.45px; }
.base footer { padding-right: 22px; }
.sync footer { padding-right: 22px; letter-spacing: -.4px; }
.base footer .caret, .sync footer .caret { position: absolute; right: 8px; }
.more { margin: 78px 6px 0 auto; }

.work { height: 506px; display: flex; }
.rail { width: 32px; background: #dcdcdc; border-right: 1px solid #a6a6a6; }
.rail div { display: flex; align-items: center; justify-content: center; width: 35px; }
.rail svg { width: 24px; height: 24px; }
.rail .font { height: 28px; width: 29px; font-size: 13px; }
.rail .asm { height: 55px; padding-top: 12px; }
.rail .cur { height: 45px; width: 30px; margin-left: 2px; background: #fff; border: 1px solid #a6a6a6; border-right: 0; }
.rail .net { height: 62px; }
.rail .time { height: 45px; }
.rail .cfg { height: 40px; }
.navigator { width: 315px; padding-left: 6px; border-right: 1px solid #a6a6a6; }
.navigator h2 { margin: 0; height: 28px; width: 299px; padding: 2px 7px 0 4px; display: flex; align-items: center; justify-content: space-between; font-size: 12.5px; font-weight: 400; letter-spacing: -.15px; }
.max { width: 12px; height: 11px; border: 1px solid #111; border-top-width: 2px; }
.tree { width: 299px; height: 370px; border: 1px solid #ccc; padding: 1px 1px 0; }
.row { height: 20px; display: grid; grid-template-columns: 200px 24px 24px 47px; font-size: 12.5px; line-height: 18px; letter-spacing: -.1px; }
.row > span { display: flex; align-items: center; overflow: hidden; border-right: 1px solid #e8e8e8; border-bottom: 1px solid #e8e8e8; justify-content: center; }
.row > span:first-child { justify-content: flex-start; }
.row > span:last-child { border-right: 0; }
.row:nth-child(odd) { background: #f9f9f9; }
.row svg { width: 16px; height: 16px; }
.row.head { background: #efefef; letter-spacing: 0; }
.row.head > span { border-color: #c8c8c8; border-bottom: 0; padding-left: 6px; justify-content: flex-start; }
.up { border: 5px solid transparent; border-top: 0; border-bottom: 5px solid #222; margin-left: 16px; }
.row.focus { margin-top: -1px; height: 20px; background: #fff; }
.row em { align-self: stretch; padding-left: 2px; width: 170px; border-left: 1px dotted #222; border-top: 1px dotted #222; border-bottom: 1px dotted #222; line-height: 17px; }
.row.focus > span { border-bottom: 0; }
.row.focus > span:not(:first-child) { border-top: 1px dotted #222; border-bottom: 1px dotted #222; }
.l1 { padding-left: 4px; }
.l2 { padding-left: 27px; letter-spacing: -.27px; }
.wide { letter-spacing: -.2px; }
.twig { width: 15px; height: 20px; flex: none; background: repeating-linear-gradient(#999 0 1px, transparent 1px 2px) 5px 0 / 1px 100% no-repeat, repeating-linear-gradient(90deg, #999 0 1px, transparent 1px 2px) 5px 10px / 9px 1px no-repeat; }
.l2 .twig { width: 10px; background-position: 1px 0, 1px 10px; }
.last { background-size: 1px 10px, 9px 1px; }
.first { background-position: 5px 10px, 5px 10px; }
.plus::before, .minus::before { content: "+"; display: block; width: 9px; height: 9px; margin: 6px 0 0; border: 1px solid #bbb; background: #fff; font: 10px/7px "Liberation Sans", sans-serif; text-align: center; color: #000; }
.minus::before { content: "−"; }
.row.off > span:first-child { color: #a0a0a0; }
.strong { font-weight: 600; }
.l1 svg:last-of-type { margin-right: 3px; }
.l2 svg:last-of-type { margin-right: 4px; }
.focus .l1 svg:last-of-type { margin-right: 0; }
.row.short { height: 12px; }
.row.short > span { border-bottom: 0; }
.scroll { height: 15px; margin-top: 1px; background: #efefef; padding: 6px 0 0 17px; }
.scroll i { display: block; width: 221px; height: 2px; background: #858585; }
.splitter { width: 299px; height: 5px; margin-top: 1px; border: 1px solid #a0a0a0; background: #d5d5d5; }
.fold { width: 299px; height: 24px; padding-top: 2px; display: flex; align-items: center; gap: 6px; padding-left: 6px; border-bottom: 2px solid #ccc; color: #0d6a8b; font-size: 14px; }
.dep { letter-spacing: .25px; }
.fold svg { width: 12px; height: 13px; }
.graphics { width: 897px; }
.docs { height: 24px; display: flex; border-bottom: 2px solid #006487; }
.doc { display: flex; align-items: center; width: 142px; padding-left: 6px; gap: 4px; font-size: 12.5px; letter-spacing: -.32px; }
.doc svg { width: 16px; height: 16px; }
.doc.active { width: 101px; background: #006487; color: #fff; letter-spacing: 0; }
.doc .pin { width: 8px; height: 10px; margin-left: 3px; }
.doc .x { width: 8px; height: 8px; margin-left: 3px; }
.pin path, .x path { fill: none; stroke: #fff; }
.x path { stroke-width: 2; }
.canvas { width: 897px; height: 481px; background: #232529; border-left: 1px solid #ddd; }
.edge { fill: none; stroke: #272c2f; stroke-width: 2.2; }
.side { fill: #4d5659; stroke: #272c2f; stroke-width: 1.6; }
.rim { stroke: #272c2f; stroke-width: 2.4; }
.palette { width: 36px; padding: 13px 0 0 6px; }
.palette svg { width: 24px; height: 24px; margin-bottom: 8px; }
.rule { display: block; width: 28px; height: 1px; margin-top: 2px; background: #ccc; }
.left { display: block; width: 0; margin: 160px 0 0 3px; border: 3px solid transparent; border-left: 0; border-right-color: #222; }
.status { height: 23px; border-top: 1px solid #aaa; border-bottom: 1px solid #bbb; line-height: 20px; padding-left: 3px; font-size: 11.5px; letter-spacing: -.05px; color: #000; }
```
